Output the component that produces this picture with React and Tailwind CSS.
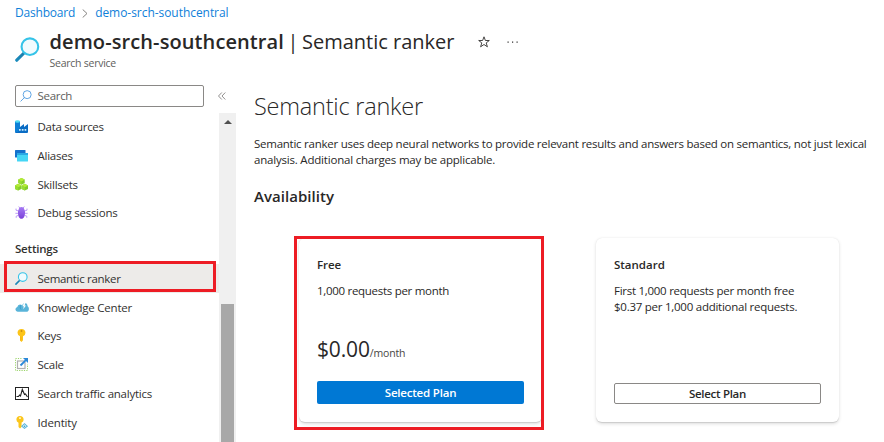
function Magnifier({ size, thin, color }) {
  return (
    <svg width={size} height={size} viewBox="0 0 24 24" fill="none" className="shrink-0">
      <defs>
        <linearGradient id="handle" x1="0" y1="24" x2="9" y2="14" gradientUnits="userSpaceOnUse">
          <stop offset="0" stopColor="#1a8fc0" />
          <stop offset="1" stopColor="#1b7aa9" />
        </linearGradient>
      </defs>
      <path d="M1.7 22.3 L8.4 15.6" stroke={color || "url(#handle)"} strokeWidth={thin ? 1.6 : 3} strokeLinecap="round" />
      <circle cx="14.3" cy="9.3" r="8" fill={thin ? "none" : "#f1fbfe"} stroke={color || "#35c3e8"} strokeWidth={thin ? 1.6 : 2} />
    </svg>
  );
}

function DataSourcesIcon() {
  return (
    <svg width="13" height="13" viewBox="0 0 13 13">
      <path d="M0 1.5h5V7l4-3v3l4-3v8a1 1 0 0 1-1 1H1a1 1 0 0 1-1-1z" fill="#0a6cc4" />
      <path d="M0 1.5h5V7L3 12H0z" fill="#0d7fd6" />
      <ellipse cx="2.5" cy="1.5" rx="2.5" ry="1.3" fill="#50dcf2" />
      <path d="M4 9h1.7v1.7H4zM6.8 9h1.7v1.7H6.8zM9.6 9h1.7v1.7H9.6z" fill="#c8ecfb" />
    </svg>
  );
}

function AliasesIcon() {
  return (
    <svg width="13" height="13" viewBox="0 0 13 13">
      <rect x="0" y="1" width="10.5" height="7.5" rx=".5" fill="#1471cc" />
      <rect x="2" y="4" width="11" height="8.500" rx=".5" fill="#45d6f5" />
      <rect x="2" y="4" width="11" height="2" fill="#28a8e4" />
    </svg>
  );
}

function Cube({ x, y }) {
  return (
    <g transform={`translate(${x} ${y})`}>
      <path d="M3.2 0 6.4 1.6v3.5L3.2 6.8 0 5.1V1.6z" fill="#84cc2c" />
      <path d="M3.2 0 6.4 1.6 3.2 3.4 0 1.6z" fill="#b4ec36" />
      <path d="M0 1.6 3.2 3.4v3.4L0 5.1z" fill="#98dd33" />
    </g>
  );
}

function SkillsetsIcon() {
  return (
    <svg width="13" height="13" viewBox="0 0 13 13">
      <Cube x={3.3} y={0} />
      <Cube x={0} y={5.8} />
      <Cube x={6.6} y={5.8} />
    </svg>
  );
}

function DebugIcon() {
  return (
    <svg width="13" height="13" viewBox="0 0 13 13">
      <defs>
        <linearGradient id="bug" x1="0" y1="0" x2="0" y2="1">
          <stop offset="0" stopColor="#a67af4" />
          <stop offset="1" stopColor="#7a40d8" />
        </linearGradient>
      </defs>
      <path d="M3.500 5 1 4.200V2.600M9.500 5l2.500-.8V2.600M3.500 7.300H.4M9.500 7.300h3.100M3.500 9.300l-2.300.9v1.600M9.500 9.300l2.300.9v1.600M4.800 2 3.700.5M8.200 2 9.300.5" stroke="#b48ff5" strokeWidth=".9" fill="none" />
      <path d="M6.500 1C8.200 1 9 2 9.200 3.200 9.900 4 10 5 10 6.500c0 3.500-1.200 6.300-3.500 6.300S3 10 3 6.500C3 5 3.100 4 3.800 3.200 4 2 4.800 1 6.500 1z" fill="url(#bug)" />
    </svg>
  );
}

function KnowledgeIcon() {
  return (
    <svg width="14" height="13" viewBox="0 0 14 13">
      <path d="M2.600 10.800A2.500 2.500 0 0 1 2.300 5.900 3 3 0 0 1 5 3.500c1 0 1.700.4 2.200 1C7.600 3 8.600 2 10 2c1.700 0 2.600 1.300 2.600 3.200.8.500 1.300 1.400 1.300 2.700 0 1.700-1 2.900-2.600 2.900z" fill="#59b4d9" />
      <path d="M9 1.800 7.500 5.200h1.300L8.200 8.300 11 4.600H9.600l1-2.800z" fill="#fff" />
      <path d="M5.800 4.200c-.9 1.500-.7 3.200.3 4.300" stroke="#2f93c4" strokeWidth=".8" fill="none" />
    </svg>
  );
}

function KeyIcon() {
  return (
    <svg width="13" height="13" viewBox="0 0 13 13">
      <path d="M6.500 0a4 4 0 0 1 4 3.800A3.800 3.800 0 0 1 8 7.300v4L6.500 13 5 11.500V7.300A3.800 3.800 0 0 1 2.500 3.800 4 4 0 0 1 6.500 0z" fill="#fcc419" />
      <circle cx="6.500" cy="2" r=".9" fill="#c98b12" />
      <path d="M5.800 7.500v4" stroke="#f5a914" strokeWidth=".8" />
    </svg>
  );
}

function ScaleIcon() {
  return (
    <svg width="13" height="13" viewBox="0 0 13 13" fill="none">
      <rect x=".5" y=".5" width="12" height="12" stroke="#9bd46a" strokeDasharray="1.200 1.200" />
      <rect x="2.500" y="3" width="7.500" height="7.500" fill="#fff" stroke="#b0b0b0" strokeWidth="1.200" />
      <path d="M6.500 0H13v6.500z" fill="#fff" />
      <path d="M8 0h5v5z" fill="#2b88d8" />
      <path d="M5.500 7.500 10.800 2.200" stroke="#2b88d8" strokeWidth="1.900" />
    </svg>
  );
}

function TrafficIcon() {
  return (
    <svg width="14" height="13" viewBox="0 0 14 13" fill="none">
      <rect x=".5" y=".5" width="13" height="12" stroke="#222" />
      <path d="M1.500 9.500h2l1-1.500 1 1L7.300 2.500 9.500 7.500l1-.5 2 3" stroke="#222" strokeWidth="1.100" />
    </svg>
  );
}

function IdentityIcon() {
  return (
    <svg width="13" height="13" viewBox="0 0 13 13">
      <path d="M5 0a3.600 3.600 0 0 1 3.600 3.500c0 1.500-.8 2.600-2 3.100L6.500 11 5 12.500 3.500 11V6.700A3.500 3.500 0 0 1 1.400 3.500 3.600 3.600 0 0 1 5 0z" fill="#fbc61c" />
      <circle cx="5" cy="2.100" r=".9" fill="#fff" />
      <path d="M9.500 7 13 10.200 9.500 13 6 10.200z" fill="#59b4d9" />
      <path d="m9.500 8.300 2 1.900-2 1.500-2-1.500z" fill="#e4f6fc" />
      <circle cx="9.500" cy="10.200" r=".8" fill="#3999c6" />
    </svg>
  );
}

function NavItem({ icon, label, tracking, active }) {
  return (
    <div className={`flex h-[28.8px] items-center pl-[15px] ${active ? "bg-[#edebe9]" : ""}`}>
      <span className="flex w-[22.500px] items-center">{icon}</span>
      <span className={`text-[11.500px] whitespace-nowrap ${tracking}`}>{label}</span>
    </div>
  );
}

function Sidebar() {
  return (
    <aside className="flex w-[236px] shrink-0 flex-col">
      <div className="flex h-[22px] items-center">
        <div className="ml-[15px] flex h-[22px] w-[189px] items-center rounded-xs border border-[#8a8886] pl-1">
          <Magnifier size={12} thin color="#3a8fdc" />
          <span className="ml-[5.500px] text-[11.500px] tracking-[-0.300px] text-[#605e5c]">Search</span>
        </div>
        <svg width="8" height="8" viewBox="0 0 8 8" fill="none" stroke="#767472" strokeWidth=".8" className="ml-[14px]">
          <path d="M3.800.5.500 4l3.300 3.500M7.300.5 4 4l3.300 3.500" />
        </svg>
      </div>
      <div className="mt-[5.600px] flex min-h-0 flex-1">
        <nav className="relative w-[219px] text-[#323130]">
          <div className="-mt-[0.400px] mb-[0.400px]">
            <NavItem icon={<DataSourcesIcon />} label="Data sources" tracking="tracking-[-0.300px]" />
            <NavItem icon={<AliasesIcon />} label="Aliases" tracking="tracking-[-0.250px]" />
            <NavItem icon={<SkillsetsIcon />} label="Skillsets" tracking="tracking-[-0.250px]" />
            <NavItem icon={<DebugIcon />} label="Debug sessions" tracking="tracking-[-0.240px]" />
          </div>
          <h3 className="flex h-[36.200px] items-center pt-[5px] pl-[15px] text-[11.500px] font-semibold tracking-[-0.200px]">Settings</h3>
          <NavItem icon={<Magnifier size={13} />} label="Semantic ranker" tracking="tracking-[-0.310px]" active />
          <NavItem icon={<KnowledgeIcon />} label="Knowledge Center" tracking="tracking-[-0.220px]" />
          <NavItem icon={<KeyIcon />} label="Keys" tracking="tracking-[-0.250px]" />
          <NavItem icon={<ScaleIcon />} label="Scale" tracking="tracking-[-0.250px]" />
          <NavItem icon={<TrafficIcon />} label="Search traffic analytics" tracking="tracking-[-0.240px]" />
          <NavItem icon={<IdentityIcon />} label="Identity" tracking="tracking-[-0.150px]" />
          <div className="absolute top-[148.400px] left-1 h-[31px] w-[212px] border-3 border-[#ed1c24]" />
        </nav>
        <div className="mt-[0.400px] flex w-[17px] flex-col items-center bg-[#f0f0f0]">
          <svg width="8" height="4" viewBox="0 0 8 4" className="mt-[7px] shrink-0">
            <path d="M4 0 8 4H0z" fill="#505050" />
          </svg>
          <div className="mt-[180px] mr-px w-[13px] flex-1 bg-[#a8a8a8]" />
        </div>
      </div>
    </aside>
  );
}

export default function App() {
  return (
    <div className="flex h-[442px] w-[884px] flex-col overflow-hidden bg-white font-['Open_Sans','Noto_Sans',sans-serif] text-[#292827]">
      <header className="h-[85px] shrink-0">
        <div className="flex h-[26px] items-center pl-[15px] text-[12px] text-[#0f7fd9]">
          <span className="tracking-[-0.200px]">Dashboard</span>
          <svg width="6" height="9" viewBox="0 0 6 9" fill="none" stroke="#767472" strokeWidth=".9" className="mx-[7px]">
            <path d="m.7.500 4.300 4-4.300 4" />
          </svg>
          <span className="tracking-[-0.050px]">demo-srch-southcentral</span>
        </div>
        <div className="flex pl-[15px]">
          <span className="mt-[11px]"><Magnifier size={25} /></span>
          <div className="ml-[9.500px]">
            <h1 className="flex h-[31px] items-center text-[20px] whitespace-nowrap">
              <span className="font-semibold tracking-[0.100px]">demo-srch-southcentral</span>
              <span className="ml-[3.500px]">|</span>
              <span className="ml-[3.500px]">Semantic ranker</span>
              <svg width="12" height="12" viewBox="0 0 12 12" fill="none" stroke="#323130" strokeWidth=".9" className="ml-[23px]">
                <path d="m6 .8 1.400 3.700h3.900L8.200 6.900l1.200 3.900L6 8.500l-3.400 2.300 1.200-3.900L.7 4.500h3.900z" />
              </svg>
              <svg width="12" height="2" viewBox="0 0 12 2" fill="#323130" className="ml-[17px]">
                <path d="M.5.500h1.200v1.200H.5zM5 .500h1.200v1.200H5zM9.500.500h1.200v1.200H9.500z" />
              </svg>
            </h1>
            <p className="text-[10.500px] leading-[12px] tracking-[-0.250px] text-[#605e5c]">Search service</p>
          </div>
        </div>
      </header>
      <div className="flex min-h-0 flex-1">
        <Sidebar />
        <main className="min-w-0 flex-1 pl-[18px]">
          <h2 className="mt-[5px] text-[23.500px] leading-[32px] font-light tracking-[-0.220px]">Semantic ranker</h2>
          <p className="mt-[14px] text-[11.500px] leading-[16px] whitespace-nowrap">
            <span className="block tracking-[-0.250px]">Semantic ranker uses deep neural networks to provide relevant results and answers based on semantics, not just lexical</span>
            <span className="block tracking-[-0.200px]">analysis. Additional charges may be applicable.</span>
          </p>
          <h3 className="mt-[18px] text-[15px] leading-[20px] font-semibold tracking-[0.040px]">Availability</h3>
          <div className="mt-[32px] ml-[45px] flex gap-[54px]">
            <section className="relative flex h-[184px] w-[243px] flex-col rounded-md px-[18px] pt-[19px] shadow-[0_1.600px_3.600px_rgba(0,0,0,0.130),0_0.300px_0.900px_rgba(0,0,0,0.110)]">
              <h4 className="text-[11.500px] leading-[16px] font-semibold tracking-[-0.080px]">Free</h4>
              <p className="mt-[10px] text-[11.500px] leading-[16px] tracking-[-0.290px]">1,000 requests per month</p>
              <p className="mt-[36px] flex h-[28px] items-baseline leading-[28px]">
                <span className="text-[21px] font-medium tracking-[-0.150px]">$0.00</span>
                <span className="text-[10.500px] tracking-[-0.180px] text-[#484644]">/month</span>
              </p>
              <button className="mt-[18px] h-[23px] w-[207px] rounded-xs bg-[#0078d4] text-[11.500px] font-semibold tracking-[-0.200px] text-white">Selected Plan</button>
              <div className="absolute top-[-2px] left-[-5px] h-[194px] w-[250px] border-3 border-[#ed1c24]" />
            </section>
            <section className="flex h-[184px] w-[243px] flex-col rounded-md px-[18px] pt-[19px] shadow-[0_1.600px_3.600px_rgba(0,0,0,0.130),0_0.300px_0.900px_rgba(0,0,0,0.110)]">
              <h4 className="text-[11.500px] leading-[16px] font-semibold">Standard</h4>
              <p className="mt-[10px] text-[11.500px] leading-[16px] whitespace-nowrap">
                <span className="block tracking-[-0.270px]">First 1,000 requests per month free</span>
                <span className="block tracking-[-0.250px]">$0.37 per 1,000 additional requests.</span>
              </p>
              <button className="mt-[68px] h-[21px] w-[207px] rounded-xs border border-[#8a8886] text-[11.500px] leading-[18px] font-semibold tracking-[-0.300px]">Select Plan</button>
            </section>
          </div>
        </main>
      </div>
    </div>
  );
}
